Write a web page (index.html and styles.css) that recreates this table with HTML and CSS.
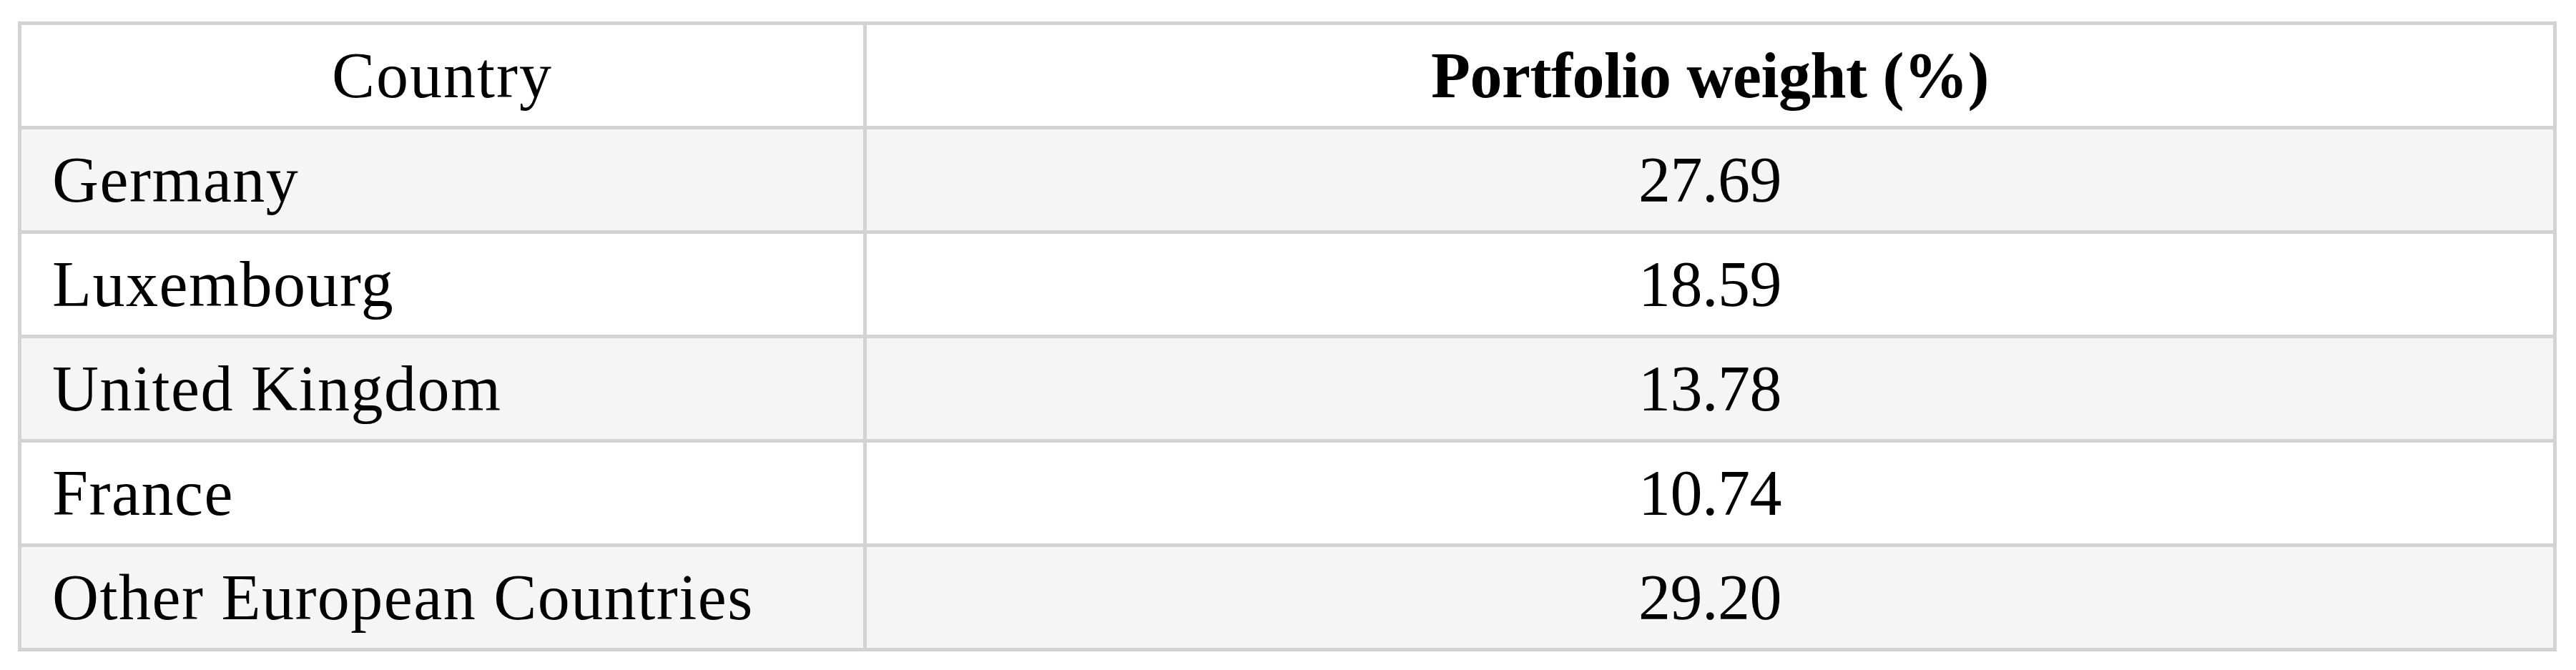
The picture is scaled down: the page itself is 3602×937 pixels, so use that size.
FILE: index.html
```html
<!DOCTYPE html>
<html lang="en">
<head>
<meta charset="utf-8">
<title>Portfolio weights by country</title>
<link rel="stylesheet" href="styles.css">
</head>
<body>
<table class="weights">
  <thead>
    <tr>
      <th class="col-country">Country</th>
      <th class="col-weight strong">Portfolio weight (%)</th>
    </tr>
  </thead>
  <tbody>
    <tr class="alt"><td class="name">Germany</td><td class="num">27.69</td></tr>
    <tr><td class="name">Luxembourg</td><td class="num">18.59</td></tr>
    <tr class="alt"><td class="name">United Kingdom</td><td class="num">13.78</td></tr>
    <tr><td class="name">France</td><td class="num">10.74</td></tr>
    <tr class="alt"><td class="name">Other European Countries</td><td class="num">29.20</td></tr>
  </tbody>
</table>
</body>
</html>
```
FILE: styles.css
```css
html, body {
  margin: 0;
  padding: 0;
  background: #ffffff;
}

body {
  padding: 30px 0 0 25px;
  font-family: "Liberation Serif", "Times New Roman", serif;
  color: #000000;
}

.weights {
  box-sizing: border-box;
  width: 3550px;
  table-layout: fixed;
  border-collapse: separate;
  border-spacing: 0;
  border-top: 5px solid #d3d3d3;
  border-left: 5px solid #d3d3d3;
  font-size: 90px;
}

.weights th,
.weights td {
  box-sizing: border-box;
  height: 146px;
  padding: 0;
  line-height: 141px;
  border-right: 5px solid #d3d3d3;
  border-bottom: 5px solid #d3d3d3;
  white-space: nowrap;
  vertical-align: middle;
}

.weights th {
  font-weight: normal;
  text-align: center;
}

.weights th.col-country {
  letter-spacing: 2px;
}

.weights th.strong {
  font-weight: bold;
  letter-spacing: -0.5px;
}

.col-country {
  width: 1182px;
}

.weights td.name {
  text-align: left;
  padding-left: 43px;
  letter-spacing: 1.5px;
}

.weights td.num {
  text-align: center;
  letter-spacing: -0.5px;
}

.weights tr.alt td {
  background: #f5f5f5;
}
```
